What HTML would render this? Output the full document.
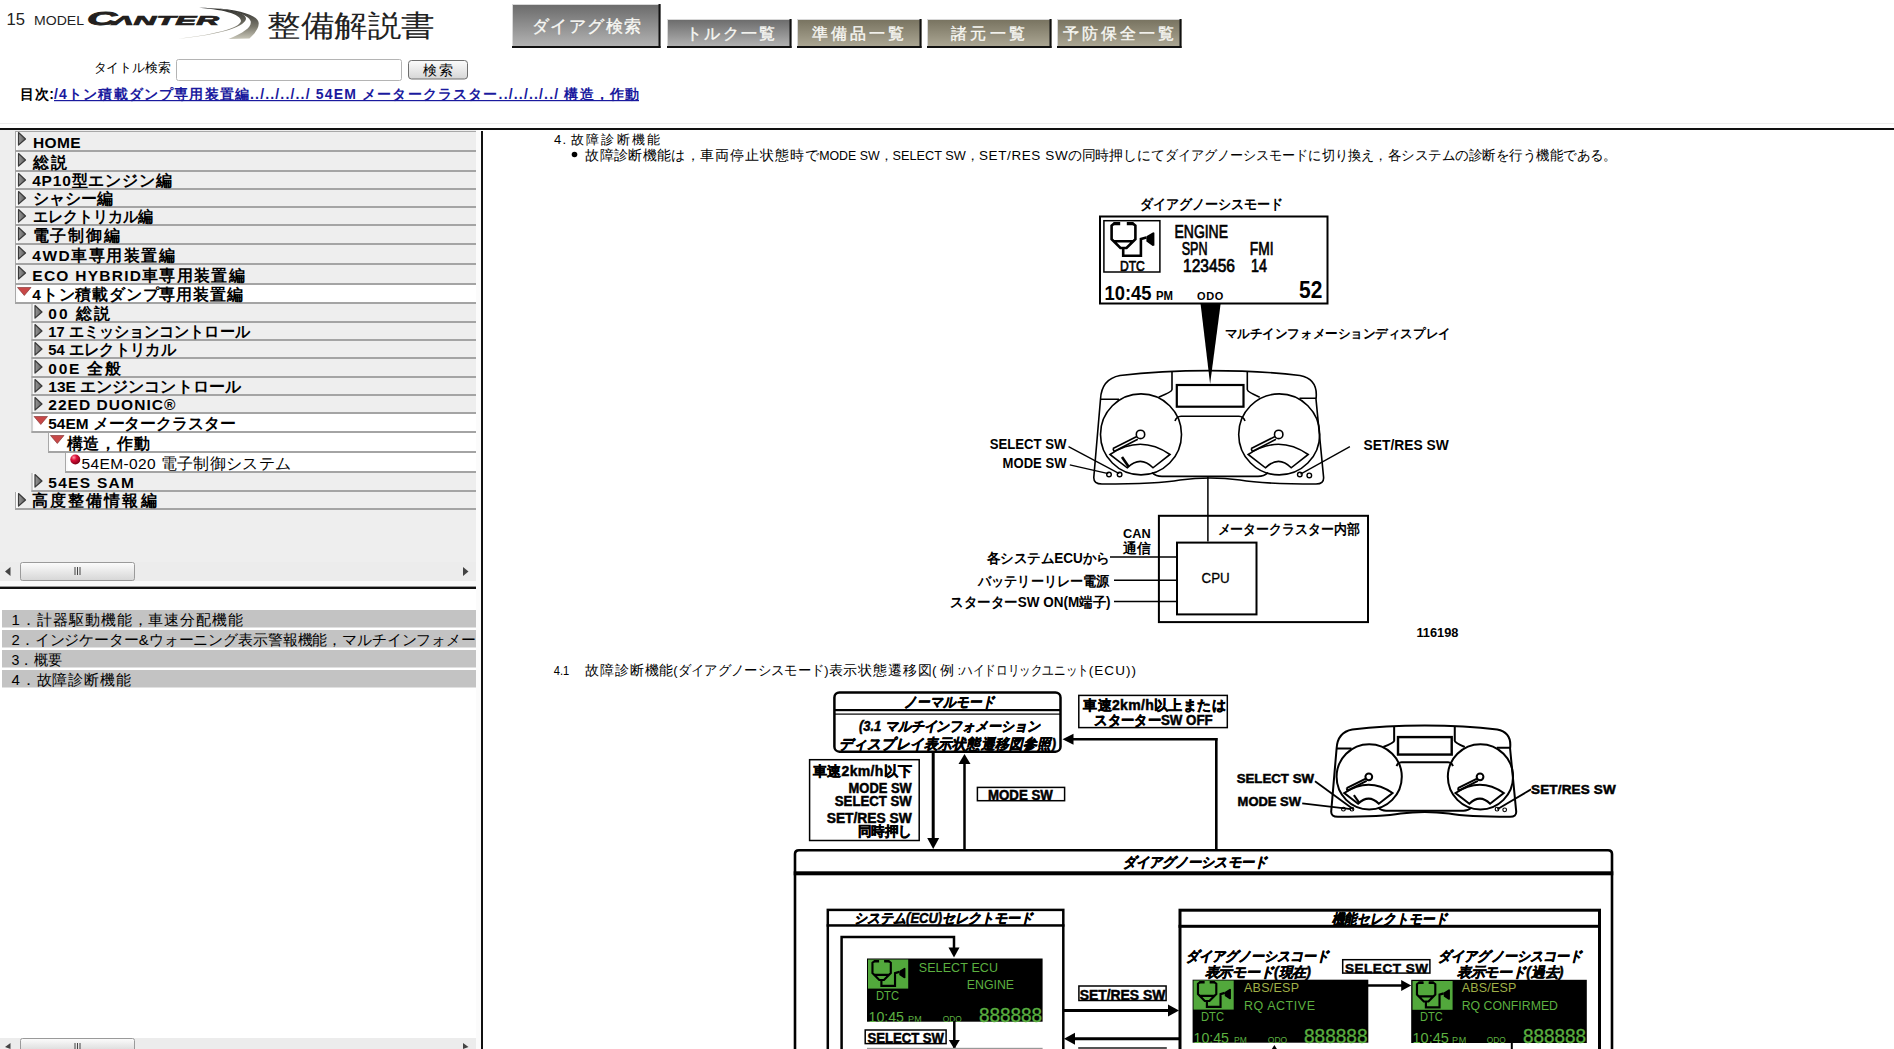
<!DOCTYPE html><html><head><meta charset="utf-8"><style>html,body{margin:0;padding:0;background:#fff;}body{width:1894px;height:1049px;overflow:hidden;}svg{display:block;font-family:"Liberation Sans",sans-serif;}</style></head><body>
<svg width="1894" height="1049" viewBox="0 0 1894 1049">
<defs>
<linearGradient id="gg" x1="0" y1="0" x2="0" y2="1"><stop offset="0" stop-color="#6a6a6a"/><stop offset="1" stop-color="#b6b6b6"/></linearGradient>
<linearGradient id="tg" x1="0" y1="0" x2="0" y2="1"><stop offset="0" stop-color="#77725f"/><stop offset="1" stop-color="#aea996"/></linearGradient>
<linearGradient id="bg" x1="0" y1="0" x2="0" y2="1"><stop offset="0" stop-color="#fcfcfc"/><stop offset="1" stop-color="#d6d6d6"/></linearGradient>
<linearGradient id="sw" x1="0" y1="0" x2="1" y2="0"><stop offset="0" stop-color="#ffffff"/><stop offset="0.55" stop-color="#6c6b63"/><stop offset="1" stop-color="#9a998c"/></linearGradient>
<linearGradient id="tri" x1="0" y1="0" x2="1" y2="0"><stop offset="0" stop-color="#9a9a9a"/><stop offset="1" stop-color="#5a5a5a"/></linearGradient>
<radialGradient id="ball" cx="0.35" cy="0.3" r="0.7"><stop offset="0" stop-color="#ff9aa8"/><stop offset="0.4" stop-color="#e0103a"/><stop offset="1" stop-color="#800018"/></radialGradient>
</defs>
<text x="6.5" y="25.0" font-size="17" fill="#222" textLength="18.5" lengthAdjust="spacingAndGlyphs">15</text>
<text x="34.0" y="25.0" font-size="12" fill="#222" textLength="50.0" lengthAdjust="spacingAndGlyphs">MODEL</text>
<linearGradient id="sw2" x1="0" y1="0" x2="0" y2="1"><stop offset="0" stop-color="#2c2c2a"/><stop offset="0.6" stop-color="#7a786c"/><stop offset="1" stop-color="#c8c6b8"/></linearGradient>
<path d="M170 39.5 C 215 36, 244 28, 246 19 C 247 12, 225 8, 194 7.5 C 222 9, 241 14, 241 21 C 240 28, 215 35, 170 39.5 Z" fill="url(#sw2)" stroke="none" stroke-width="1"/>
<path d="M228.5 39 C 245 32, 252 27, 250.6 21 C 249 15, 232 10, 214 8 C 240 10, 258 15, 258.7 23 C 259 29, 254 34, 249.5 38.5 Z" fill="url(#sw2)" stroke="none" stroke-width="1"/>
<text x="87.0" y="25.0" font-size="17.5" font-weight="bold" fill="#231f1e" font-style="italic" textLength="30.0" lengthAdjust="spacingAndGlyphs" stroke="#231f1e" stroke-width="0.8">C</text>
<text x="112.5" y="25.0" font-size="13.4" font-weight="bold" fill="#231f1e" font-style="italic" textLength="106.5" lengthAdjust="spacingAndGlyphs" stroke="#231f1e" stroke-width="0.7">ΛNTER</text>
<text x="267.0" y="36.0" font-size="30" fill="#222" textLength="168.0" lengthAdjust="spacingAndGlyphs">整備解説書</text>
<rect x="512" y="4" width="148.5" height="44" fill="url(#gg)"/>
<line x1="512" y1="4.5" x2="660.5" y2="4.5" stroke="#d8d8d8" stroke-width="1"/>
<line x1="512.5" y1="4" x2="512.5" y2="48" stroke="#d8d8d8" stroke-width="1"/>
<rect x="658.5" y="4" width="2" height="44" fill="#111"/>
<rect x="512" y="46" width="148.5" height="2" fill="#111"/>
<text x="532.0" y="32.0" font-size="17" fill="#f8f8f4" textLength="109.0" lengthAdjust="spacing" stroke="#f8f8f4" stroke-width="0.35">ダイアグ検索</text>
<rect x="667" y="19" width="124.5" height="29" fill="url(#gg)"/>
<line x1="667" y1="19.5" x2="791.5" y2="19.5" stroke="#d8d8d8" stroke-width="1"/>
<line x1="667.5" y1="19" x2="667.5" y2="48" stroke="#d8d8d8" stroke-width="1"/>
<rect x="789.5" y="19" width="2" height="29" fill="#111"/>
<rect x="667" y="46" width="124.5" height="2" fill="#111"/>
<text x="686.0" y="39.0" font-size="15.5" fill="#f8f8f4" textLength="89.0" lengthAdjust="spacing" stroke="#f8f8f4" stroke-width="0.35">トルク一覧</text>
<rect x="797" y="19" width="124.5" height="29" fill="url(#tg)"/>
<line x1="797" y1="19.5" x2="921.5" y2="19.5" stroke="#d8d8d8" stroke-width="1"/>
<line x1="797.5" y1="19" x2="797.5" y2="48" stroke="#d8d8d8" stroke-width="1"/>
<rect x="919.5" y="19" width="2" height="29" fill="#111"/>
<rect x="797" y="46" width="124.5" height="2" fill="#111"/>
<text x="812.0" y="39.0" font-size="15.5" fill="#f8f8f4" textLength="92.0" lengthAdjust="spacing" stroke="#f8f8f4" stroke-width="0.35">準備品一覧</text>
<rect x="927" y="19" width="124.5" height="29" fill="url(#tg)"/>
<line x1="927" y1="19.5" x2="1051.5" y2="19.5" stroke="#d8d8d8" stroke-width="1"/>
<line x1="927.5" y1="19" x2="927.5" y2="48" stroke="#d8d8d8" stroke-width="1"/>
<rect x="1049.5" y="19" width="2" height="29" fill="#111"/>
<rect x="927" y="46" width="124.5" height="2" fill="#111"/>
<text x="951.0" y="39.0" font-size="15.5" fill="#f8f8f4" textLength="74.0" lengthAdjust="spacing" stroke="#f8f8f4" stroke-width="0.35">諸元一覧</text>
<rect x="1057" y="19" width="124.5" height="29" fill="url(#tg)"/>
<line x1="1057" y1="19.5" x2="1181.5" y2="19.5" stroke="#d8d8d8" stroke-width="1"/>
<line x1="1057.5" y1="19" x2="1057.5" y2="48" stroke="#d8d8d8" stroke-width="1"/>
<rect x="1179.5" y="19" width="2" height="29" fill="#111"/>
<rect x="1057" y="46" width="124.5" height="2" fill="#111"/>
<text x="1063.0" y="39.0" font-size="15.5" fill="#f8f8f4" textLength="111.0" lengthAdjust="spacing" stroke="#f8f8f4" stroke-width="0.35">予防保全一覧</text>
<text x="93.5" y="71.5" font-size="13" textLength="77.0" lengthAdjust="spacingAndGlyphs">タイトル検索</text>
<rect x="176.5" y="59.5" width="225" height="21" fill="#fff" stroke="#b4b4b4" stroke-width="1" rx="2"/>
<rect x="408.5" y="60.5" width="59" height="18.5" fill="url(#bg)" stroke="#6e6e6e" stroke-width="1" rx="3"/>
<text x="423.0" y="74.5" font-size="14" textLength="30.0" lengthAdjust="spacing">検索</text>
<text x="20.0" y="98.5" font-size="14" font-weight="bold" textLength="34.0" lengthAdjust="spacing">目次:</text>
<text x="54.0" y="98.5" font-size="14" font-weight="bold" fill="#1a1a9e" textLength="585.0" lengthAdjust="spacing">/4トン積載ダンプ専用装置編../../../../ 54EM メータークラスター../../../../ 構造，作動</text>
<rect x="54" y="100" width="585" height="1.2" fill="#1a1a9e"/>
<rect x="0" y="123" width="1894" height="1" fill="#ececec"/>
<rect x="0" y="128" width="1894" height="2" fill="#111"/>
<rect x="0" y="130" width="476" height="458" fill="#eeeeee"/>
<rect x="476" y="130" width="5" height="919" fill="#fbfbfb"/>
<rect x="15" y="131" width="461" height="21" fill="#eeeeee"/>
<rect x="16" y="131" width="2" height="19" fill="#fbfbfb"/>
<rect x="15" y="131" width="1" height="21" fill="#a8a8a8"/>
<rect x="15" y="150" width="461" height="2" fill="#a4a4a4"/>
<rect x="15" y="131" width="461" height="1" fill="#a8a8a8"/>
<path d="M18.5 132.5 L25.5 139 L18.5 145 Z" fill="url(#tri)" stroke="#3a3a3a" stroke-width="1.2" stroke-linejoin="round"/>
<text x="33.0" y="147.5" font-size="15.5" font-weight="bold" textLength="47.5" lengthAdjust="spacing">HOME</text>
<rect x="15" y="152" width="461" height="20" fill="#eeeeee"/>
<rect x="16" y="152" width="2" height="18" fill="#fbfbfb"/>
<rect x="15" y="152" width="1" height="20" fill="#a8a8a8"/>
<rect x="15" y="170" width="461" height="2" fill="#a4a4a4"/>
<path d="M18.5 153.5 L25.5 160 L18.5 166 Z" fill="url(#tri)" stroke="#3a3a3a" stroke-width="1.2" stroke-linejoin="round"/>
<text x="32.5" y="167.5" font-size="15.5" font-weight="bold" textLength="34.5" lengthAdjust="spacing">総説</text>
<rect x="15" y="172" width="461" height="18" fill="#eeeeee"/>
<rect x="16" y="172" width="2" height="16" fill="#fbfbfb"/>
<rect x="15" y="172" width="1" height="18" fill="#a8a8a8"/>
<rect x="15" y="188" width="461" height="2" fill="#a4a4a4"/>
<path d="M18.5 173.5 L25.5 180 L18.5 186 Z" fill="url(#tri)" stroke="#3a3a3a" stroke-width="1.2" stroke-linejoin="round"/>
<text x="32.2" y="185.5" font-size="15.5" font-weight="bold" textLength="139.3" lengthAdjust="spacing">4P10型エンジン編</text>
<rect x="15" y="190" width="461" height="18" fill="#eeeeee"/>
<rect x="16" y="190" width="2" height="16" fill="#fbfbfb"/>
<rect x="15" y="190" width="1" height="18" fill="#a8a8a8"/>
<rect x="15" y="206" width="461" height="2" fill="#a4a4a4"/>
<path d="M18.5 191.5 L25.5 198 L18.5 204 Z" fill="url(#tri)" stroke="#3a3a3a" stroke-width="1.2" stroke-linejoin="round"/>
<text x="32.5" y="203.5" font-size="15.5" font-weight="bold" textLength="80.0" lengthAdjust="spacingAndGlyphs">シャシー編</text>
<rect x="15" y="208" width="461" height="18" fill="#eeeeee"/>
<rect x="16" y="208" width="2" height="16" fill="#fbfbfb"/>
<rect x="15" y="208" width="1" height="18" fill="#a8a8a8"/>
<rect x="15" y="224" width="461" height="2" fill="#a4a4a4"/>
<path d="M18.5 209.5 L25.5 216 L18.5 222 Z" fill="url(#tri)" stroke="#3a3a3a" stroke-width="1.2" stroke-linejoin="round"/>
<text x="32.5" y="221.5" font-size="15.5" font-weight="bold" textLength="120.2" lengthAdjust="spacingAndGlyphs">エレクトリカル編</text>
<rect x="15" y="226" width="461" height="19" fill="#eeeeee"/>
<rect x="16" y="226" width="2" height="17" fill="#fbfbfb"/>
<rect x="15" y="226" width="1" height="19" fill="#a8a8a8"/>
<rect x="15" y="243" width="461" height="2" fill="#a4a4a4"/>
<path d="M18.5 227.5 L25.5 234 L18.5 240 Z" fill="url(#tri)" stroke="#3a3a3a" stroke-width="1.2" stroke-linejoin="round"/>
<text x="32.5" y="240.5" font-size="15.5" font-weight="bold" textLength="87.8" lengthAdjust="spacing">電子制御編</text>
<rect x="15" y="245" width="461" height="20" fill="#eeeeee"/>
<rect x="16" y="245" width="2" height="18" fill="#fbfbfb"/>
<rect x="15" y="245" width="1" height="20" fill="#a8a8a8"/>
<rect x="15" y="263" width="461" height="2" fill="#a4a4a4"/>
<path d="M18.5 246.5 L25.5 253 L18.5 259 Z" fill="url(#tri)" stroke="#3a3a3a" stroke-width="1.2" stroke-linejoin="round"/>
<text x="32.3" y="260.5" font-size="15.5" font-weight="bold" textLength="142.3" lengthAdjust="spacing">4WD車専用装置編</text>
<rect x="15" y="265" width="461" height="20" fill="#eeeeee"/>
<rect x="16" y="265" width="2" height="18" fill="#fbfbfb"/>
<rect x="15" y="265" width="1" height="20" fill="#a8a8a8"/>
<rect x="15" y="283" width="461" height="2" fill="#a4a4a4"/>
<path d="M18.5 266.5 L25.5 273 L18.5 279 Z" fill="url(#tri)" stroke="#3a3a3a" stroke-width="1.2" stroke-linejoin="round"/>
<text x="32.3" y="280.5" font-size="15.5" font-weight="bold" textLength="212.2" lengthAdjust="spacing">ECO HYBRID車専用装置編</text>
<rect x="15" y="285" width="461" height="19" fill="#ffffff"/>
<rect x="16" y="285" width="2" height="17" fill="#fbfbfb"/>
<rect x="15" y="285" width="1" height="19" fill="#a8a8a8"/>
<rect x="15" y="302" width="461" height="2" fill="#a4a4a4"/>
<path d="M17.5 287.5 L31 287.5 L24.3 295.5 Z" fill="#c84848" stroke="#7a2a2a" stroke-width="0.6"/>
<text x="32.3" y="299.5" font-size="15.5" font-weight="bold" textLength="210.4" lengthAdjust="spacing">4トン積載ダンプ専用装置編</text>
<rect x="31.5" y="304" width="444.5" height="19" fill="#eeeeee"/>
<rect x="32.5" y="304" width="2" height="17" fill="#fbfbfb"/>
<rect x="31.5" y="304" width="1" height="19" fill="#a8a8a8"/>
<rect x="31.5" y="321" width="444.5" height="2" fill="#a4a4a4"/>
<path d="M35.0 305.5 L42.0 312 L35.0 318 Z" fill="url(#tri)" stroke="#3a3a3a" stroke-width="1.2" stroke-linejoin="round"/>
<text x="48.3" y="318.5" font-size="15.5" font-weight="bold" textLength="61.7" lengthAdjust="spacing">00 総説</text>
<rect x="31.5" y="323" width="444.5" height="18" fill="#eeeeee"/>
<rect x="32.5" y="323" width="2" height="16" fill="#fbfbfb"/>
<rect x="31.5" y="323" width="1" height="18" fill="#a8a8a8"/>
<rect x="31.5" y="339" width="444.5" height="2" fill="#a4a4a4"/>
<path d="M35.0 324.5 L42.0 331 L35.0 337 Z" fill="url(#tri)" stroke="#3a3a3a" stroke-width="1.2" stroke-linejoin="round"/>
<text x="48.3" y="336.5" font-size="15.5" font-weight="bold" textLength="201.4" lengthAdjust="spacingAndGlyphs">17 エミッションコントロール</text>
<rect x="31.5" y="341" width="444.5" height="18" fill="#eeeeee"/>
<rect x="32.5" y="341" width="2" height="16" fill="#fbfbfb"/>
<rect x="31.5" y="341" width="1" height="18" fill="#a8a8a8"/>
<rect x="31.5" y="357" width="444.5" height="2" fill="#a4a4a4"/>
<path d="M35.0 342.5 L42.0 349 L35.0 355 Z" fill="url(#tri)" stroke="#3a3a3a" stroke-width="1.2" stroke-linejoin="round"/>
<text x="48.3" y="354.5" font-size="15.5" font-weight="bold" textLength="127.7" lengthAdjust="spacingAndGlyphs">54 エレクトリカル</text>
<rect x="31.5" y="359" width="444.5" height="19" fill="#eeeeee"/>
<rect x="32.5" y="359" width="2" height="17" fill="#fbfbfb"/>
<rect x="31.5" y="359" width="1" height="19" fill="#a8a8a8"/>
<rect x="31.5" y="376" width="444.5" height="2" fill="#a4a4a4"/>
<path d="M35.0 360.5 L42.0 367 L35.0 373 Z" fill="url(#tri)" stroke="#3a3a3a" stroke-width="1.2" stroke-linejoin="round"/>
<text x="48.3" y="373.5" font-size="15.5" font-weight="bold" textLength="72.7" lengthAdjust="spacing">00E 全般</text>
<rect x="31.5" y="378" width="444.5" height="18" fill="#eeeeee"/>
<rect x="32.5" y="378" width="2" height="16" fill="#fbfbfb"/>
<rect x="31.5" y="378" width="1" height="18" fill="#a8a8a8"/>
<rect x="31.5" y="394" width="444.5" height="2" fill="#a4a4a4"/>
<path d="M35.0 379.5 L42.0 386 L35.0 392 Z" fill="url(#tri)" stroke="#3a3a3a" stroke-width="1.2" stroke-linejoin="round"/>
<text x="48.3" y="391.5" font-size="15.5" font-weight="bold" textLength="192.3" lengthAdjust="spacing">13E エンジンコントロール</text>
<rect x="31.5" y="396" width="444.5" height="18" fill="#eeeeee"/>
<rect x="32.5" y="396" width="2" height="16" fill="#fbfbfb"/>
<rect x="31.5" y="396" width="1" height="18" fill="#a8a8a8"/>
<rect x="31.5" y="412" width="444.5" height="2" fill="#a4a4a4"/>
<path d="M35.0 397.5 L42.0 404 L35.0 410 Z" fill="url(#tri)" stroke="#3a3a3a" stroke-width="1.2" stroke-linejoin="round"/>
<text x="48.3" y="409.5" font-size="15.5" font-weight="bold" textLength="127.1" lengthAdjust="spacing">22ED DUONIC®</text>
<rect x="31.5" y="414" width="444.5" height="19" fill="#ffffff"/>
<rect x="32.5" y="414" width="2" height="17" fill="#fbfbfb"/>
<rect x="31.5" y="414" width="1" height="19" fill="#a8a8a8"/>
<rect x="31.5" y="431" width="444.5" height="2" fill="#a4a4a4"/>
<path d="M34.0 416.5 L47.5 416.5 L40.8 424.5 Z" fill="#c84848" stroke="#7a2a2a" stroke-width="0.6"/>
<text x="48.3" y="428.5" font-size="15.5" font-weight="bold" textLength="187.1" lengthAdjust="spacingAndGlyphs">54EM メータークラスター</text>
<rect x="48" y="433" width="428" height="20" fill="#ffffff"/>
<rect x="49" y="433" width="2" height="18" fill="#fbfbfb"/>
<rect x="48" y="433" width="1" height="20" fill="#a8a8a8"/>
<rect x="48" y="451" width="428" height="2" fill="#a4a4a4"/>
<path d="M50.5 435.5 L64 435.5 L57.3 443.5 Z" fill="#c84848" stroke="#7a2a2a" stroke-width="0.6"/>
<text x="66.7" y="448.5" font-size="15.5" font-weight="bold" textLength="82.8" lengthAdjust="spacing">構造，作動</text>
<rect x="65" y="453" width="411" height="20" fill="#ffffff"/>
<rect x="66" y="453" width="2" height="18" fill="#fbfbfb"/>
<rect x="65" y="453" width="1" height="20" fill="#a8a8a8"/>
<rect x="65" y="471" width="411" height="2" fill="#a4a4a4"/>
<circle cx="75.3" cy="459.5" r="5" fill="url(#ball)"/>
<text x="81.5" y="468.5" font-size="15.5" textLength="209.5" lengthAdjust="spacing">54EM-020 電子制御システム</text>
<rect x="31.5" y="473" width="444.5" height="19" fill="#eeeeee"/>
<rect x="32.5" y="473" width="2" height="17" fill="#fbfbfb"/>
<rect x="31.5" y="473" width="1" height="19" fill="#a8a8a8"/>
<rect x="31.5" y="490" width="444.5" height="2" fill="#a4a4a4"/>
<path d="M35.0 474.5 L42.0 481 L35.0 487 Z" fill="url(#tri)" stroke="#3a3a3a" stroke-width="1.2" stroke-linejoin="round"/>
<text x="48.3" y="487.5" font-size="15.5" font-weight="bold" textLength="85.7" lengthAdjust="spacing">54ES SAM</text>
<rect x="15" y="492" width="461" height="18" fill="#eeeeee"/>
<rect x="16" y="492" width="2" height="16" fill="#fbfbfb"/>
<rect x="15" y="492" width="1" height="18" fill="#a8a8a8"/>
<rect x="15" y="508" width="461" height="2" fill="#a4a4a4"/>
<path d="M18.5 493.5 L25.5 500 L18.5 506 Z" fill="url(#tri)" stroke="#3a3a3a" stroke-width="1.2" stroke-linejoin="round"/>
<text x="32.3" y="505.5" font-size="15.5" font-weight="bold" textLength="124.2" lengthAdjust="spacing">高度整備情報編</text>
<rect x="0" y="562" width="476" height="19" fill="#ececec"/>
<rect x="20.5" y="562.5" width="114" height="18" fill="url(#bg)" stroke="#9a9a9a" stroke-width="1" rx="2"/>
<rect x="74.5" y="567" width="1" height="8" fill="#444"/>
<rect x="77" y="567" width="1" height="8" fill="#444"/>
<rect x="79.5" y="567" width="1" height="8" fill="#444"/>
<path d="M5 571.5 L10.5 567 L10.5 576 Z" fill="#444"/>
<path d="M468.5 571.5 L463 567 L463 576 Z" fill="#444"/>
<rect x="0" y="581" width="476" height="5" fill="#fafafa"/>
<rect x="0" y="586" width="476" height="1" fill="#9a9a9a"/>
<rect x="0" y="587" width="476" height="2" fill="#111"/>
<rect x="0" y="589" width="476" height="460" fill="#fff"/>
<clipPath id="lc"><rect x="0" y="600" width="476" height="100"/></clipPath>
<g clip-path="url(#lc)">
<rect x="2" y="610" width="474" height="17.5" fill="#c3c3c3"/>
<text x="11.6" y="624.5" font-size="15" textLength="231.6" lengthAdjust="spacing">1．計器駆動機能，車速分配機能</text>
<rect x="2" y="630" width="474" height="17.5" fill="#c3c3c3"/>
<text x="11.6" y="644.5" font-size="15" textLength="464.4" lengthAdjust="spacingAndGlyphs">2．インジケーター&amp;ウォーニング表示警報機能，マルチインフォメー</text>
<rect x="2" y="650" width="474" height="17.5" fill="#c3c3c3"/>
<text x="11.6" y="664.5" font-size="15" textLength="50.4" lengthAdjust="spacingAndGlyphs">3．概要</text>
<rect x="2" y="670" width="474" height="17.5" fill="#c3c3c3"/>
<text x="11.6" y="684.5" font-size="15" textLength="119.1" lengthAdjust="spacing">4．故障診断機能</text>
</g>
<rect x="0" y="1038" width="476" height="11" fill="#ececec"/>
<rect x="20.5" y="1038.5" width="114" height="14" fill="url(#bg)" stroke="#9a9a9a" stroke-width="1" rx="2"/>
<rect x="74.5" y="1043" width="1" height="6" fill="#444"/>
<rect x="77" y="1043" width="1" height="6" fill="#444"/>
<rect x="79.5" y="1043" width="1" height="6" fill="#444"/>
<path d="M5 1047 L10.5 1043 L10.5 1049 Z" fill="#444"/>
<path d="M468.5 1047 L463 1043 L463 1049 Z" fill="#444"/>
<rect x="481" y="131" width="2" height="918" fill="#111"/>
<text x="554.0" y="144.0" font-size="13" textLength="12.0" lengthAdjust="spacing">4.</text>
<text x="571.0" y="144.0" font-size="13" textLength="89.0" lengthAdjust="spacing">故障診断機能</text>
<circle cx="574.5" cy="154.5" r="2.8" fill="#000"/>
<text x="585.3" y="159.5" font-size="13.5" textLength="114.2" lengthAdjust="spacing">故障診断機能は，</text>
<text x="699.5" y="159.5" font-size="13.5" textLength="119.7" lengthAdjust="spacing">車両停止状態時で</text>
<text x="819.2" y="159.5" font-size="13.5" textLength="73.3" lengthAdjust="spacingAndGlyphs">MODE SW，</text>
<text x="892.5" y="159.5" font-size="13.5" textLength="86.5" lengthAdjust="spacingAndGlyphs">SELECT SW，</text>
<text x="979.0" y="159.5" font-size="13.5" textLength="88.7" lengthAdjust="spacing">SET/RES SW</text>
<text x="1067.7" y="159.5" font-size="13.5" textLength="96.8" lengthAdjust="spacingAndGlyphs">の同時押しにて</text>
<text x="1164.5" y="159.5" font-size="13.5" textLength="143.9" lengthAdjust="spacingAndGlyphs">ダイアグノーシスモード</text>
<text x="1308.4" y="159.5" font-size="13.5" textLength="79.2" lengthAdjust="spacingAndGlyphs">に切り換え，</text>
<text x="1387.6" y="159.5" font-size="13.5" textLength="229.4" lengthAdjust="spacingAndGlyphs">各システムの診断を行う機能である。</text>
<text x="1139.5" y="209.0" font-size="14" font-weight="bold" textLength="144.0" lengthAdjust="spacingAndGlyphs">ダイアグノーシスモード</text>
<rect x="1100" y="216.5" width="227.5" height="87" fill="none" stroke="#000" stroke-width="2"/>
<rect x="1103.9" y="220.7" width="56" height="51.3" fill="none" stroke="#000" stroke-width="1.5"/>
<g transform="translate(1103.2,220) scale(1.0)"><path d="M16.4 3.4 L11.2 3.4 L8.4 5.6 L8.4 19.1 L17.25 28 L23.3 28 L32.2 19.1 L32.2 5.6 L29.4 3.4 L24.2 3.4 M10.6 21.3 L30 21.3 M20 28 L20 35.7 L37.7 35.7 L37.7 19.1 L43.2 17.5" fill="none" stroke="#000" stroke-width="2.6" stroke-linejoin="miter"/><path d="M10.5 2 L17 2 L17 5.2 L10.5 5.2 Z M23.6 2 L30 2 L30 5.2 L23.6 5.2 Z M43.2 16.3 L50 12.2 L51.2 12.8 L51.2 25.4 L49.5 25.9 L43.2 21.5 Z" fill="#000"/></g>
<text x="1120.0" y="271.0" font-size="15" textLength="24.8" lengthAdjust="spacingAndGlyphs" stroke="#000" stroke-width="0.7">DTC</text>
<text x="1174.5" y="237.5" font-size="18" textLength="53.5" lengthAdjust="spacingAndGlyphs" stroke="#000" stroke-width="0.7">ENGINE</text>
<text x="1181.7" y="255.3" font-size="18" textLength="25.8" lengthAdjust="spacingAndGlyphs" stroke="#000" stroke-width="0.7">SPN</text>
<text x="1249.7" y="255.3" font-size="18" textLength="23.8" lengthAdjust="spacingAndGlyphs" stroke="#000" stroke-width="0.7">FMI</text>
<text x="1183.0" y="271.8" font-size="18" textLength="52.0" lengthAdjust="spacingAndGlyphs" stroke="#000" stroke-width="0.7">123456</text>
<text x="1251.0" y="271.8" font-size="18" textLength="16.0" lengthAdjust="spacingAndGlyphs" stroke="#000" stroke-width="0.7">14</text>
<text x="1104.5" y="299.6" font-size="21" font-weight="bold" textLength="47.0" lengthAdjust="spacingAndGlyphs">10:45</text>
<text x="1156.0" y="299.6" font-size="12" font-weight="bold" textLength="17.0" lengthAdjust="spacingAndGlyphs">PM</text>
<text x="1197.0" y="299.6" font-size="11" font-weight="bold" textLength="26.3" lengthAdjust="spacing">ODO</text>
<text x="1299.0" y="297.6" font-size="23" font-weight="bold" textLength="23.3" lengthAdjust="spacingAndGlyphs">52</text>
<path d="M1200.6 304 L1220.6 304 L1210.1 384 Z" fill="#000"/>
<text x="1224.7" y="338.2" font-size="13" font-weight="bold" textLength="226.0" lengthAdjust="spacingAndGlyphs">マルチインフォメーションディスプレイ</text>
<g transform="translate(1093.8,370.6) scale(1.0)" fill="none" stroke="#000" stroke-width="1.6">
<path d="M0.0 106.7 L6.7 28.6 Q7.7 8.4 26.2 4.9 Q66.2 0.0 116.2 0.0 Q166.2 0.0 206.2 4.9 Q224.7 8.4 222.2 28.6 L229.8 106.7 Q230.2 113.4 222.2 113.4 Q168.2 113.4 146.2 109.4 Q116.2 105.4 86.2 109.4 Q64.2 113.4 8.2 113.4 Q-0.3 113.4 0.0 106.7 Z"/>
<path d="M6.7 28.6 L25.2 28.6 M205.7 27.6 L222.2 27.6"/>
<path d="M78.2 0.9 L78.2 19.0 Q78.2 21.4 64.8 26.7 M153.5 0.9 L153.5 19.0 Q153.5 21.4 165.9 26.7"/>
<rect x="83.0" y="14.399999999999977" width="66.7" height="21.7" stroke-width="2.2"/>
<circle cx="47.200000000000045" cy="63.799999999999955" r="40.5"/>
<circle cx="46.700000000000045" cy="63.799999999999955" r="4.2"/>
<path d="M19.2 77.9 L43.0 65.9 M20.2 80.9 L44.0 68.7 M19.2 77.9 L20.2 80.9"/>
<path d="M16.2 83.9 Q46.7 63.4 76.2 83.9 L59.2 97.2 Q46.7 84.4 33.4 97.2 Z"/>
<circle cx="185.4000000000001" cy="63.799999999999955" r="40.5"/>
<circle cx="184.9000000000001" cy="63.799999999999955" r="4.2"/>
<path d="M157.4 77.9 L181.2 65.9 M158.4 80.9 L182.2 68.7 M157.4 77.9 L158.4 80.9"/>
<path d="M154.4 83.9 Q184.9 63.4 214.4 83.9 L197.4 97.2 Q184.9 84.4 171.6 97.2 Z"/>
<path d="M87.2 45.7 L145.2 45.7 Q149.7 45.9 151.2 50.4 M87.2 45.7 Q82.7 45.9 81.2 50.4"/>
<path d="M58.2 102.0 Q62.2 105.8 68.2 105.8 L164.2 105.8 Q170.2 105.8 174.2 102.0"/>
<path d="M28.2 86.4 L34.7 95.9" stroke-width="2.6"/>
<circle cx="15.200000000000045" cy="103.89999999999998" r="2.3" stroke-width="1.4"/>
<circle cx="25.799999999999955" cy="103.89999999999998" r="2.3" stroke-width="1.4"/>
<circle cx="206.0" cy="103.89999999999998" r="2.3" stroke-width="1.4"/>
<circle cx="215.5" cy="104.79999999999995" r="2.3" stroke-width="1.4"/>
</g>
<line x1="1068.5" y1="446.6" x2="1119.3" y2="473.6" stroke="#000" stroke-width="1.3"/>
<line x1="1069.8" y1="464.8" x2="1108.3" y2="473.6" stroke="#000" stroke-width="1.3"/>
<line x1="1349.9" y1="446.6" x2="1300.5" y2="474.1" stroke="#000" stroke-width="1.3"/>
<text x="989.7" y="449.4" font-size="14" font-weight="bold" textLength="76.8" lengthAdjust="spacingAndGlyphs">SELECT SW</text>
<text x="1002.6" y="468.0" font-size="14" font-weight="bold" textLength="63.9" lengthAdjust="spacingAndGlyphs">MODE SW</text>
<text x="1363.6" y="450.2" font-size="14" font-weight="bold" textLength="85.1" lengthAdjust="spacingAndGlyphs">SET/RES SW</text>
<line x1="1207.9" y1="477" x2="1207.9" y2="541.6" stroke="#000" stroke-width="1.5"/>
<rect x="1158.9" y="515.8" width="209.1" height="106.3" fill="none" stroke="#000" stroke-width="2"/>
<rect x="1177" y="542.6" width="79.5" height="71.8" fill="none" stroke="#000" stroke-width="2"/>
<text x="1201.5" y="583.0" font-size="14.5" textLength="28.2" lengthAdjust="spacingAndGlyphs" stroke="#000" stroke-width="0.3">CPU</text>
<text x="1217.5" y="534.0" font-size="14" font-weight="bold" textLength="142.2" lengthAdjust="spacingAndGlyphs">メータークラスター内部</text>
<text x="1123.0" y="538.0" font-size="13.5" font-weight="bold" textLength="27.7" lengthAdjust="spacingAndGlyphs">CAN</text>
<text x="1123.0" y="552.8" font-size="14" font-weight="bold" textLength="27.7" lengthAdjust="spacingAndGlyphs">通信</text>
<text x="986.6" y="562.8" font-size="14" font-weight="bold" textLength="123.4" lengthAdjust="spacingAndGlyphs">各システムECUから</text>
<text x="978.0" y="585.5" font-size="14" font-weight="bold" textLength="131.4" lengthAdjust="spacingAndGlyphs">バッテリーリレー電源</text>
<text x="950.3" y="606.5" font-size="14" font-weight="bold" textLength="160.3" lengthAdjust="spacingAndGlyphs">スターターSW ON(M端子)</text>
<line x1="1110" y1="557" x2="1177" y2="557" stroke="#000" stroke-width="1.5"/>
<line x1="1114" y1="580.2" x2="1177" y2="580.2" stroke="#000" stroke-width="1.5"/>
<line x1="1114" y1="601.4" x2="1177" y2="601.4" stroke="#000" stroke-width="1.5"/>
<text x="1416.4" y="637.4" font-size="13.5" font-weight="bold" textLength="42.1" lengthAdjust="spacingAndGlyphs">116198</text>
<text x="553.7" y="674.5" font-size="13" textLength="15.5" lengthAdjust="spacingAndGlyphs">4.1</text>
<text x="585.4" y="674.5" font-size="13.5" textLength="87.9" lengthAdjust="spacing">故障診断機能</text>
<text x="673.3" y="674.5" font-size="13.5" textLength="155.2" lengthAdjust="spacingAndGlyphs">(ダイアグノーシスモード)</text>
<text x="828.5" y="674.5" font-size="13.5" textLength="103.4" lengthAdjust="spacing">表示状態遷移図</text>
<text x="931.9" y="674.5" font-size="13.5" textLength="29.3" lengthAdjust="spacing">(例:</text>
<text x="961.2" y="674.5" font-size="13.5" textLength="127.5" lengthAdjust="spacingAndGlyphs">ハイドロリックユニット</text>
<text x="1088.7" y="674.5" font-size="13.5" textLength="47.3" lengthAdjust="spacing">(ECU))</text>
<rect x="834.4" y="692.5" width="226.1" height="59.2" fill="none" stroke="#000" stroke-width="2.5" rx="5"/>
<rect x="834.4" y="709" width="226.1" height="2.2" fill="#000"/>
<rect x="834.4" y="713.5" width="226.1" height="1.2" fill="#000"/>
<text x="903.7" y="707.2" font-size="14.5" font-weight="bold" font-style="italic" textLength="90.8" lengthAdjust="spacingAndGlyphs" stroke="#000" stroke-width="0.5">ノーマルモード</text>
<text x="859.0" y="730.8" font-size="14" font-weight="bold" font-style="italic" textLength="180.8" lengthAdjust="spacingAndGlyphs" stroke="#000" stroke-width="0.5">(3.1 マルチインフォメーション</text>
<text x="838.9" y="748.5" font-size="14.5" font-weight="bold" font-style="italic" textLength="217.1" lengthAdjust="spacingAndGlyphs" stroke="#000" stroke-width="0.5">ディスプレイ表示状態遷移図参照)</text>
<rect x="1078.8" y="695.4" width="148.5" height="32.2" fill="none" stroke="#000" stroke-width="1.5"/>
<text x="1083.2" y="709.8" font-size="14" font-weight="bold" textLength="142.3" lengthAdjust="spacing" stroke="#000" stroke-width="0.5">車速2km/h以上または</text>
<text x="1094.3" y="724.6" font-size="14" font-weight="bold" textLength="118.4" lengthAdjust="spacingAndGlyphs" stroke="#000" stroke-width="0.5">スターターSW OFF</text>
<line x1="1070" y1="739.2" x2="1217.5" y2="739.2" stroke="#000" stroke-width="2.6"/>
<line x1="1216.3" y1="738" x2="1216.3" y2="849" stroke="#000" stroke-width="2.6"/>
<path d="M1073.5 733.7 L1073.5 744.7 L1062.5 739.2 Z" fill="#000"/>
<rect x="809.6" y="759.7" width="109.6" height="80.8" fill="none" stroke="#000" stroke-width="1.5"/>
<text x="813.0" y="776.4" font-size="14" font-weight="bold" textLength="98.8" lengthAdjust="spacing" stroke="#000" stroke-width="0.5">車速2km/h以下</text>
<text x="848.6" y="792.6" font-size="14" font-weight="bold" textLength="63.2" lengthAdjust="spacingAndGlyphs" stroke="#000" stroke-width="0.5">MODE SW</text>
<text x="834.8" y="806.4" font-size="14" font-weight="bold" textLength="77.0" lengthAdjust="spacingAndGlyphs" stroke="#000" stroke-width="0.5">SELECT SW</text>
<text x="826.7" y="822.6" font-size="14" font-weight="bold" textLength="85.1" lengthAdjust="spacingAndGlyphs" stroke="#000" stroke-width="0.5">SET/RES SW</text>
<text x="857.5" y="836.2" font-size="14" font-weight="bold" textLength="54.3" lengthAdjust="spacingAndGlyphs" stroke="#000" stroke-width="0.5">同時押し</text>
<line x1="933.2" y1="752" x2="933.2" y2="840" stroke="#000" stroke-width="3"/>
<path d="M927.2 838 L939.2 838 L933.2 849 Z" fill="#000"/>
<line x1="964.5" y1="762" x2="964.5" y2="849" stroke="#000" stroke-width="2.5"/>
<path d="M958.5 764 L970.5 764 L964.5 754 Z" fill="#000"/>
<rect x="977.4" y="787.4" width="87.2" height="13.3" fill="none" stroke="#000" stroke-width="1.5"/>
<text x="988.0" y="800.2" font-size="14" font-weight="bold" textLength="64.8" lengthAdjust="spacingAndGlyphs" stroke="#000" stroke-width="0.5">MODE SW</text>
<g transform="translate(1331.2,725.5) scale(0.805)" fill="none" stroke="#000" stroke-width="2.5">
<path d="M0.0 106.7 L6.7 28.6 Q7.7 8.4 26.2 4.9 Q66.2 0.0 116.2 0.0 Q166.2 0.0 206.2 4.9 Q224.7 8.4 222.2 28.6 L229.8 106.7 Q230.2 113.4 222.2 113.4 Q168.2 113.4 146.2 109.4 Q116.2 105.4 86.2 109.4 Q64.2 113.4 8.2 113.4 Q-0.3 113.4 0.0 106.7 Z"/>
<path d="M6.7 28.6 L25.2 28.6 M205.7 27.6 L222.2 27.6"/>
<path d="M78.2 0.9 L78.2 19.0 Q78.2 21.4 64.8 26.7 M153.5 0.9 L153.5 19.0 Q153.5 21.4 165.9 26.7"/>
<rect x="83.0" y="14.399999999999977" width="66.7" height="21.7" stroke-width="3"/>
<circle cx="47.200000000000045" cy="63.799999999999955" r="40.5"/>
<circle cx="46.700000000000045" cy="63.799999999999955" r="4.2"/>
<path d="M19.2 77.9 L43.0 65.9 M20.2 80.9 L44.0 68.7 M19.2 77.9 L20.2 80.9"/>
<path d="M16.2 83.9 Q46.7 63.4 76.2 83.9 L59.2 97.2 Q46.7 84.4 33.4 97.2 Z"/>
<circle cx="185.4000000000001" cy="63.799999999999955" r="40.5"/>
<circle cx="184.9000000000001" cy="63.799999999999955" r="4.2"/>
<path d="M157.4 77.9 L181.2 65.9 M158.4 80.9 L182.2 68.7 M157.4 77.9 L158.4 80.9"/>
<path d="M154.4 83.9 Q184.9 63.4 214.4 83.9 L197.4 97.2 Q184.9 84.4 171.6 97.2 Z"/>
<path d="M87.2 45.7 L145.2 45.7 Q149.7 45.9 151.2 50.4 M87.2 45.7 Q82.7 45.9 81.2 50.4"/>
<path d="M58.2 102.0 Q62.2 105.8 68.2 105.8 L164.2 105.8 Q170.2 105.8 174.2 102.0"/>
<path d="M28.2 86.4 L34.7 95.9" stroke-width="2.6"/>
<circle cx="15.200000000000045" cy="103.89999999999998" r="2.3" stroke-width="1.4"/>
<circle cx="25.799999999999955" cy="103.89999999999998" r="2.3" stroke-width="1.4"/>
<circle cx="206.0" cy="103.89999999999998" r="2.3" stroke-width="1.4"/>
<circle cx="215.5" cy="104.79999999999995" r="2.3" stroke-width="1.4"/>
</g>
<line x1="1315" y1="781.3" x2="1353.3" y2="809.2" stroke="#000" stroke-width="1.8"/>
<line x1="1302.2" y1="803.4" x2="1351" y2="809.2" stroke="#000" stroke-width="1.8"/>
<line x1="1531" y1="789.4" x2="1497.3" y2="809.2" stroke="#000" stroke-width="1.8"/>
<text x="1236.7" y="783.0" font-size="13.5" font-weight="bold" textLength="77.3" lengthAdjust="spacingAndGlyphs" stroke="#000" stroke-width="0.5">SELECT SW</text>
<text x="1237.6" y="806.0" font-size="13.5" font-weight="bold" textLength="63.4" lengthAdjust="spacingAndGlyphs" stroke="#000" stroke-width="0.5">MODE SW</text>
<text x="1531.0" y="794.0" font-size="13.5" font-weight="bold" textLength="84.8" lengthAdjust="spacing" stroke="#000" stroke-width="0.5">SET/RES SW</text>
<path d="M795 1060 L795 854 Q795 850.2 799 850.2 L1608 850.2 Q1612 850.2 1612 854 L1612 1060" fill="none" stroke="#000" stroke-width="2.6"/>
<rect x="793.7" y="871.3" width="819.6" height="4" fill="#000"/>
<text x="1122.6" y="866.8" font-size="14" font-weight="bold" font-style="italic" textLength="144.4" lengthAdjust="spacingAndGlyphs" stroke="#000" stroke-width="0.5">ダイアグノーシスモード</text>
<rect x="827.8" y="909.9" width="235.5" height="150" fill="none" stroke="#000" stroke-width="2.5"/>
<rect x="826.6" y="924.2" width="237.9" height="2.5" fill="#000"/>
<text x="854.3" y="923.2" font-size="14" font-weight="bold" font-style="italic" textLength="178.5" lengthAdjust="spacingAndGlyphs" stroke="#000" stroke-width="0.5">システム(ECU)セレクトモード</text>
<path d="M841.6 1060 L841.6 936.9 L954 936.9 L954 948" fill="none" stroke="#000" stroke-width="2.5"/>
<path d="M948.5 947.5 L959.5 947.5 L954 957.5 Z" fill="#000"/>
<rect x="867" y="958.5" width="175.5999999999999" height="63.200000000000045" fill="#000"/>
<rect x="868" y="959.5" width="40.200000000000045" height="29.100000000000023" fill="#52a83c"/>
<g transform="translate(866,958.4) scale(0.77)"><path d="M16.4 3.4 L11.2 3.4 L8.4 5.6 L8.4 19.1 L17.25 28 L23.3 28 L32.2 19.1 L32.2 5.6 L29.4 3.4 L24.2 3.4 M10.6 21.3 L30 21.3 M20 28 L20 35.7 L37.7 35.7 L37.7 19.1 L43.2 17.5" fill="none" stroke="#000" stroke-width="2.8" stroke-linejoin="miter"/><path d="M10.5 2 L17 2 L17 5.2 L10.5 5.2 Z M23.6 2 L30 2 L30 5.2 L23.6 5.2 Z M43.2 16.3 L50 12.2 L51.2 12.8 L51.2 25.4 L49.5 25.9 L43.2 21.5 Z" fill="#000"/></g>
<text x="918.7" y="971.6" font-size="12.5" fill="#5cb040" textLength="79.3" lengthAdjust="spacing">SELECT ECU</text>
<text x="966.8" y="988.6" font-size="12.5" fill="#5cb040" textLength="47.2" lengthAdjust="spacingAndGlyphs">ENGINE</text>
<text x="876.0" y="999.7" font-size="12.5" fill="#5cb040" textLength="23.0" lengthAdjust="spacingAndGlyphs">DTC</text>
<text x="868.5" y="1021.5" font-size="15.5" fill="#5cb040" textLength="35.5" lengthAdjust="spacingAndGlyphs">10:45</text>
<text x="908.0" y="1021.5" font-size="9" fill="#5cb040" textLength="13.7" lengthAdjust="spacing">PM</text>
<text x="942.8" y="1021.5" font-size="9.5" fill="#5cb040" textLength="19.0" lengthAdjust="spacingAndGlyphs">ODO</text>
<text x="978.9" y="1021.5" font-size="21" fill="#5cb040" textLength="63.1" lengthAdjust="spacingAndGlyphs" stroke="#52a83c" stroke-width="0.4">888888</text>
<line x1="954.3" y1="1021" x2="954.3" y2="1049" stroke="#000" stroke-width="2.5"/>
<path d="M948.8 1040 L959.8 1040 L954.3 1049 Z" fill="#000"/>
<rect x="865.2" y="1030" width="80.9" height="13.6" fill="#fff" stroke="#000" stroke-width="1.5"/>
<text x="867.5" y="1042.8" font-size="14" font-weight="bold" textLength="76.5" lengthAdjust="spacingAndGlyphs" stroke="#000" stroke-width="0.5">SELECT SW</text>
<rect x="867" y="1047.8" width="175.6" height="1.2" fill="#999"/>
<rect x="1078.9" y="986" width="87.2" height="14.5" fill="none" stroke="#000" stroke-width="1.5"/>
<text x="1079.8" y="999.8" font-size="14" font-weight="bold" textLength="85.5" lengthAdjust="spacingAndGlyphs" stroke="#000" stroke-width="0.5">SET/RES SW</text>
<line x1="1064" y1="1010.6" x2="1170" y2="1010.6" stroke="#000" stroke-width="3"/>
<path d="M1168 1004.6 L1168 1016.6 L1179 1010.6 Z" fill="#000"/>
<line x1="1074" y1="1038.8" x2="1179" y2="1038.8" stroke="#000" stroke-width="3"/>
<path d="M1075 1032.8 L1075 1044.8 L1064 1038.8 Z" fill="#000"/>
<rect x="1078.2" y="1047" width="88.6" height="2" fill="#555"/>
<rect x="1180" y="910.2" width="419.5" height="150" fill="none" stroke="#000" stroke-width="3"/>
<rect x="1178.5" y="924.8" width="422.5" height="3" fill="#000"/>
<text x="1331.5" y="924.0" font-size="14.5" font-weight="bold" font-style="italic" textLength="116.5" lengthAdjust="spacingAndGlyphs" stroke="#000" stroke-width="0.5">機能セレクトモード</text>
<text x="1185.9" y="961.2" font-size="14" font-weight="bold" font-style="italic" textLength="142.7" lengthAdjust="spacingAndGlyphs" stroke="#000" stroke-width="0.5">ダイアグノーシスコード</text>
<text x="1204.5" y="976.5" font-size="14" font-weight="bold" font-style="italic" textLength="106.5" lengthAdjust="spacingAndGlyphs" stroke="#000" stroke-width="0.5">表示モード(現在)</text>
<text x="1438.4" y="961.2" font-size="14" font-weight="bold" font-style="italic" textLength="143.3" lengthAdjust="spacingAndGlyphs" stroke="#000" stroke-width="0.5">ダイアグノーシスコード</text>
<text x="1456.6" y="976.5" font-size="14" font-weight="bold" font-style="italic" textLength="106.9" lengthAdjust="spacingAndGlyphs" stroke="#000" stroke-width="0.5">表示モード(過去)</text>
<rect x="1342.7" y="959.7" width="87.2" height="13.4" fill="none" stroke="#000" stroke-width="1.5"/>
<text x="1345.0" y="972.6" font-size="13.5" font-weight="bold" textLength="83.0" lengthAdjust="spacing" stroke="#000" stroke-width="0.5">SELECT SW</text>
<rect x="1192.6" y="979.7" width="175.70000000000005" height="63.0" fill="#000"/>
<rect x="1193.5" y="980.5" width="40.200000000000045" height="29.100000000000023" fill="#52a83c"/>
<g transform="translate(1191.5,979.4) scale(0.77)"><path d="M16.4 3.4 L11.2 3.4 L8.4 5.6 L8.4 19.1 L17.25 28 L23.3 28 L32.2 19.1 L32.2 5.6 L29.4 3.4 L24.2 3.4 M10.6 21.3 L30 21.3 M20 28 L20 35.7 L37.7 35.7 L37.7 19.1 L43.2 17.5" fill="none" stroke="#000" stroke-width="2.8" stroke-linejoin="miter"/><path d="M10.5 2 L17 2 L17 5.2 L10.5 5.2 Z M23.6 2 L30 2 L30 5.2 L23.6 5.2 Z M43.2 16.3 L50 12.2 L51.2 12.8 L51.2 25.4 L49.5 25.9 L43.2 21.5 Z" fill="#000"/></g>
<text x="1244.0" y="991.5" font-size="12.5" fill="#a0b048" textLength="55.0" lengthAdjust="spacing">ABS/ESP</text>
<text x="1244.0" y="1010.0" font-size="12.5" fill="#5cb040" textLength="71.0" lengthAdjust="spacing">RQ ACTIVE</text>
<text x="1201.0" y="1020.8" font-size="12.5" fill="#5cb040" textLength="23.0" lengthAdjust="spacingAndGlyphs">DTC</text>
<text x="1193.5" y="1043.0" font-size="15.5" fill="#5cb040" textLength="35.5" lengthAdjust="spacingAndGlyphs">10:45</text>
<text x="1234.0" y="1043.0" font-size="9" fill="#5cb040" textLength="12.7" lengthAdjust="spacingAndGlyphs">PM</text>
<text x="1267.8" y="1043.0" font-size="9.5" fill="#5cb040" textLength="19.4" lengthAdjust="spacingAndGlyphs">ODO</text>
<text x="1304.0" y="1043.0" font-size="21" fill="#5cb040" textLength="63.5" lengthAdjust="spacingAndGlyphs" stroke="#52a83c" stroke-width="0.4">888888</text>
<rect x="1411.2" y="979.8" width="175.5999999999999" height="63.200000000000045" fill="#000"/>
<rect x="1412.5" y="981" width="40.09999999999991" height="28.799999999999955" fill="#52a83c"/>
<g transform="translate(1410.5,979.9) scale(0.77)"><path d="M16.4 3.4 L11.2 3.4 L8.4 5.6 L8.4 19.1 L17.25 28 L23.3 28 L32.2 19.1 L32.2 5.6 L29.4 3.4 L24.2 3.4 M10.6 21.3 L30 21.3 M20 28 L20 35.7 L37.7 35.7 L37.7 19.1 L43.2 17.5" fill="none" stroke="#000" stroke-width="2.8" stroke-linejoin="miter"/><path d="M10.5 2 L17 2 L17 5.2 L10.5 5.2 Z M23.6 2 L30 2 L30 5.2 L23.6 5.2 Z M43.2 16.3 L50 12.2 L51.2 12.8 L51.2 25.4 L49.5 25.9 L43.2 21.5 Z" fill="#000"/></g>
<text x="1461.7" y="991.5" font-size="12.5" fill="#a0b048" textLength="54.6" lengthAdjust="spacing">ABS/ESP</text>
<text x="1461.7" y="1010.0" font-size="12.5" fill="#5cb040" textLength="96.3" lengthAdjust="spacingAndGlyphs">RQ CONFIRMED</text>
<text x="1420.0" y="1020.8" font-size="12.5" fill="#5cb040" textLength="22.8" lengthAdjust="spacingAndGlyphs">DTC</text>
<text x="1412.5" y="1043.0" font-size="15.5" fill="#5cb040" textLength="36.3" lengthAdjust="spacingAndGlyphs">10:45</text>
<text x="1451.9" y="1043.0" font-size="9" fill="#5cb040" textLength="14.4" lengthAdjust="spacing">PM</text>
<text x="1486.7" y="1043.0" font-size="9.5" fill="#5cb040" textLength="19.0" lengthAdjust="spacingAndGlyphs">ODO</text>
<text x="1523.0" y="1043.0" font-size="21" fill="#5cb040" textLength="63.0" lengthAdjust="spacingAndGlyphs" stroke="#52a83c" stroke-width="0.4">888888</text>
<line x1="1368" y1="985.5" x2="1402" y2="985.5" stroke="#000" stroke-width="2.5"/>
<path d="M1401.2 980.0 L1401.2 991.0 L1411.2 985.5 Z" fill="#000"/>
<line x1="1511.8" y1="1043" x2="1511.8" y2="1049" stroke="#000" stroke-width="2"/>
<path d="M1269.4 1053 L1279.4 1053 L1274.4 1045 Z" fill="#000"/>
</svg></body></html>
